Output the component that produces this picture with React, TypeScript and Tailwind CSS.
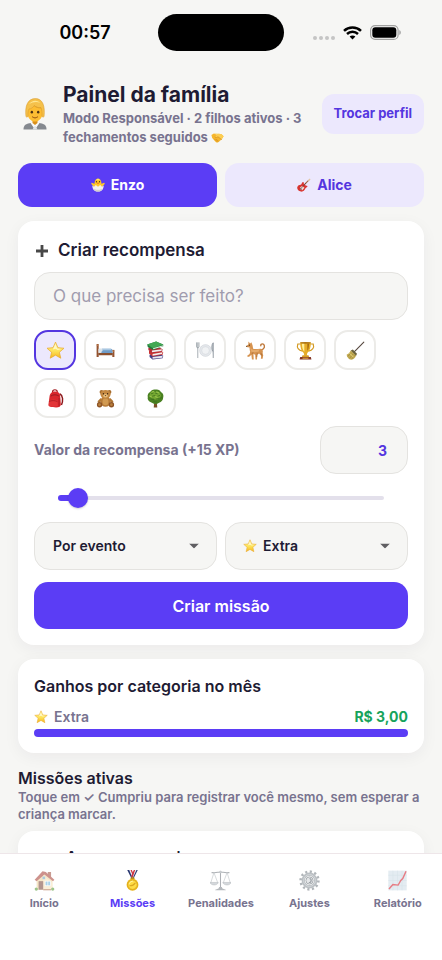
import { useState } from "react";
import type { ReactNode } from "react";

type IconProps = { className?: string };

function Svg({ className, box = "0 0 32 32", children }: IconProps & { box?: string; children: ReactNode }) {
  return (
    <svg viewBox={box} fill="none" className={className} aria-hidden="true">
      {children}
    </svg>
  );
}

function Parent({ className }: IconProps) {
  return (
    <Svg className={className} box="0 0 24 32">
      <path d="M.5 31.500c0-4 2-5.600 6-6.200L12 24l5.500 1.300c4 .6 6 2.200 6 6.200z" fill="#85898f" />
      <path d="M7.500 25l4.500 6.500 4.500-6.500-2-2h-5z" fill="#f8f9fa" />
      <path d="M12 27.500l-1 1.500-1.500 2.500h5L13 29z" fill="#dfe3e8" />
      <path d="M9.500 20h5v5L12 27l-2.500-2z" fill="#d98f1c" />
      <g transform="translate(1.700 0) scale(.86 .98)">
        <path d="M3.200 11c0-5 3.800-8 8.800-8s8.800 3 8.800 8v4c0 5-4 9-8.800 9s-8.800-4-8.800-9z" fill="#fdbd33" />
        <path
          d="M1.500 19C0 8 3.500.6 12.500.6c8 0 11.500 7 10 18.400-1 .8-2 .6-2.400-.5.2-3.500-.1-6-1.100-8.500-3 .2-5.800-.6-8-2.200C9.500 10 7.500 11 5 11.200c-1 2-1.400 4-1.200 7.300-.4 1.100-1.400 1.300-2.300.5z"
          fill="#f5c14b"
          stroke="#d9992b"
          strokeWidth=".6"
        />
        <path d="M5 6.500c3-4 9-5 13-1.500-4-1.500-9-1-13 1.500z" fill="#ffe793" />
        <path d="M11 7.800c1.600 1.200 4 2.300 8 2.200" stroke="#d9992b" strokeWidth=".7" />
        <circle cx="8.300" cy="14.500" r="1.400" fill="#4d3215" />
        <circle cx="15.700" cy="14.500" r="1.400" fill="#4d3215" />
        <path d="M9 19.300c2 1.300 4 1.300 6 0" stroke="#9c5a12" strokeWidth="1.100" strokeLinecap="round" />
      </g>
    </Svg>
  );
}

function Handshake({ className }: IconProps) {
  return (
    <Svg className={className}>
      <path d="M1 10l6-4 8 3 4-2 7 1 5 5-5 8-9 7c-3 1-5-1-7-3L3 17z" fill="#f6b62c" />
      <path d="M7 6l8 3-5 6c2 2 5 1 7-1l8 7 3-3 3-5-5-5-7-1" fill="#fccd52" />
      <path d="M10 15c2 2 5 1 7-1l9 7M13 20l5 5M9 20l6 6" stroke="#c67f18" strokeWidth="1.400" strokeLinecap="round" />
    </Svg>
  );
}

function Chick({ className }: IconProps) {
  return (
    <Svg className={className}>
      <path d="M4 17c-4-2-4-6-2-6 2 0 3 2 6 2 0-7 3-12 8-12s8 5 8 12c3 0 4-2 6-2s2 4-2 6l-4 5H8z" fill="#ffc928" />
      <path d="M12 3c2-2 6-2 8 0-2 3-6 3-8 0z" fill="#ffe56e" />
      <circle cx="12.500" cy="8.500" r="1.500" fill="#4b3214" />
      <circle cx="19.500" cy="8.500" r="1.500" fill="#4b3214" />
      <path d="M13 11.500l3-1.200 3 1.200-3 2.500z" fill="#ec7325" />
      <path d="M3 17l4 3 4-4 5 4 5-4 4 4 4-3c0 9-5 14-13 14S3 26 3 17z" fill="#f4f2ee" />
      <path d="M6 24c5 4 15 4 20 0-2 5-5 7-10 7S8 29 6 24z" fill="#d3cfca" />
    </Svg>
  );
}

function Guitar({ className }: IconProps) {
  return (
    <Svg className={className}>
      <path d="M14 18L27 5" stroke="#a06a44" strokeWidth="2.500" />
      <path d="M25 5l4-4 2 2-4 5z" fill="#e2c7a4" />
      <path d="M2 18c2-4 6-1 8-4s1-5 5-5l1 5 4 3 4 1c0 3-3 3-5 6-2 4-5 8-10 7C2 30-2 23 2 18z" fill="#d8342f" />
      <path d="M7 21l5-3 5 4-5 6c-3-1-5-3-5-7z" fill="#f3dfd8" />
      <path d="M8 25L21 11" stroke="#55423e" strokeWidth="1.500" />
      <path d="M7 22l4 5" stroke="#6a6470" strokeWidth="2" />
    </Svg>
  );
}

function Plus({ className }: IconProps) {
  return (
    <Svg className={className}>
      <path d="M13.200 4h5.600v9.200H28v5.600h-9.200V28h-5.600v-9.200H4v-5.600h9.200z" fill="#484848" />
    </Svg>
  );
}

function Star({ className }: IconProps) {
  return (
    <Svg className={className}>
      <defs>
        <linearGradient id="starFill" x1="0" y1="0" x2="0" y2="1">
          <stop stopColor="#fff09a" />
          <stop offset=".55" stopColor="#fde35a" />
          <stop offset="1" stopColor="#f5b51f" />
        </linearGradient>
      </defs>
      <path
        d="M16 1.800l4.100 9.400 10.200 1-7.700 6.800 2.300 10L16 23.800 7.100 29l2.300-10-7.700-6.800 10.200-1z"
        fill="url(#starFill)"
        stroke="#e9a92c"
        strokeWidth="1.200"
        strokeLinejoin="round"
      />
      <path d="M16 5l2.800 7.800 7 .7-6 1.500L16 13l-4.500 1.500z" fill="#fff8c4" />
    </Svg>
  );
}

function Bed({ className }: IconProps) {
  return (
    <Svg className={className}>
      <path d="M1 5h3.500v22H1z" fill="#94532f" />
      <path d="M27.500 15H31v12h-3.500z" fill="#94532f" />
      <path d="M4 19.500h24V24H4z" fill="#8a4f2d" />
      <path d="M4 17h24v3H4z" fill="#dfe8ef" />
      <path d="M10 13h15c2 0 3 1.500 3 7H9z" fill="#6f9cc8" />
      <path d="M10 13h15l1.500 2.500H11z" fill="#a8c7e2" />
      <rect x="4" y="12.500" width="7" height="5" rx="2" fill="#dbe3ea" />
      <path d="M1 7h3.500M27.500 17H31" stroke="#c98b5c" strokeWidth="1.500" />
    </Svg>
  );
}

function Books({ className }: IconProps) {
  return (
    <Svg className={className}>
      <path d="M6 23l16-2 7 4-1 4-17 2-5-4z" fill="#453b83" />
      <path d="M11 27l17-2-.5 3L11 30z" fill="#e8e8ef" />
      <path d="M5 17l17-2 7 4-1 4-17 3-6-5z" fill="#c83232" />
      <path d="M11 22l17-3-1 3-16 3z" fill="#f2eeee" />
      <path d="M4 11l17-1 7 4-1 4-17 2-6-5z" fill="#b42b36" />
      <path d="M10 16l17-2-1 3-16 2z" fill="#f0efef" />
      <path d="M2 6l15-5 12 5v3l-17 6L3 10z" fill="#207c3c" />
      <path d="M2 6l15-5 12 5-17 6z" fill="#43a854" />
      <path d="M12 12l17-5v2l-17 5z" fill="#e9f1e7" />
    </Svg>
  );
}

function Plate({ className }: IconProps) {
  return (
    <Svg className={className}>
      <circle cx="16" cy="16" r="10" fill="#e5e8ec" stroke="#c7ccd2" strokeWidth=".8" />
      <circle cx="16" cy="16" r="6.500" fill="#f0f2f4" stroke="#cfd4da" strokeWidth=".9" />
      <path d="M1 3v7c0 2 4 2 4 0V3M3 3v25" stroke="#8d959e" strokeWidth="1.300" strokeLinecap="round" />
      <path d="M29 28V3c-3 3-3 10-1 14" stroke="#8d959e" strokeWidth="1.500" fill="#c3c9cf" strokeLinecap="round" />
    </Svg>
  );
}

function Dog({ className }: IconProps) {
  return (
    <Svg className={className}>
      <path d="M25 15c6-1 7-6 5-9-2-2-6-1-5 2" stroke="#bf793c" strokeWidth="2.300" strokeLinecap="round" />
      <path
        d="M4 1l3 3 2-2 2 5 1 6c4 1 8 0 12 0 4 0 5 3 4 7l1 4-1 6h-3l.5-5-3.500-4-3 2-.5 8H16l-.5-8-3-1 .5 9h-3l-1-8-3 3-3 1-1-2 4-3 1-4c-1-3-1-5-1-7l-5-1V8l3-2z"
        fill="#d69350"
      />
      <path d="M7 10c2 4 4 5 8 5l8-1-2 4-7 1-5-1z" fill="#e5ab6c" />
      <path d="M12 19l-2 3M19 20l-1 7M25 20l2 5" stroke="#9b6033" strokeWidth="1" />
      <circle cx="5.500" cy="7" r=".9" fill="#3c2412" />
      <circle cx="1.200" cy="9" r=".9" fill="#3c2412" />
    </Svg>
  );
}

function Trophy({ className }: IconProps) {
  return (
    <Svg className={className}>
      <path d="M8 5H3c-2 6 1 11 8 12M24 5h5c2 6-1 11-8 12" stroke="#d49b24" strokeWidth="2" />
      <path d="M7 2h18c0 9-2 15-6 18l-1 5h-4l-1-5C9 17 7 11 7 2z" fill="#e6ad27" />
      <path d="M10 4h4v14c-3-3-4-8-4-14z" fill="#fff09b" />
      <path d="M19 4h3c0 6-1 10-3 13z" fill="#a96d12" />
      <ellipse cx="16" cy="3" rx="9" ry="1.500" fill="#ad761a" />
      <path d="M11 24h10l1 3H10z" fill="#d79a22" />
      <path d="M7 27h18l1 4H6z" fill="#843526" />
      <path d="M11 28h10v2H11z" fill="#d69e35" />
    </Svg>
  );
}

function Broom({ className }: IconProps) {
  return (
    <Svg className={className}>
      <path d="M13 19L30 2" stroke="#54463c" strokeWidth="1.800" strokeLinecap="round" />
      <path d="M8 16l9 8c-1 4-4 7-8 7.500-5-1-7-4-8-8.500 3-1 5-3 7-7z" fill="#c2aa50" />
      <path d="M8 16l3.500-1.500 7 7L17 25z" fill="#6b633c" />
      <path d="M9 20l-6 6M12 22l-6 7M15 24l-5 6" stroke="#8f7a36" strokeWidth="1" />
      <path d="M6 20.500l7 7" stroke="#eddd83" strokeWidth="1.600" />
    </Svg>
  );
}

function Backpack({ className }: IconProps) {
  return (
    <Svg className={className}>
      <path d="M23 8c6 3 6 12 3 19" stroke="#8c171b" strokeWidth="2.500" />
      <path d="M11 5c0-5 8-5 8 0" stroke="#a31c21" strokeWidth="2" />
      <path d="M6 12c1-6 5-8 9-8 6 0 9 3 9 9l1 13c0 3-3 5-8 5-8 0-13-1-13-4z" fill="#d9272d" />
      <path d="M8 12c4-3 10-3 14 0" stroke="#8e1b20" strokeWidth="1.500" />
      <path d="M5 19c5-2 10-2 14 0l1 9c-4 2-11 2-15 0z" fill="#e23538" />
      <path d="M5 21c5-2 9-2 14 0M22 15v14" stroke="#a51b22" strokeWidth="1.300" />
    </Svg>
  );
}

function Teddy({ className }: IconProps) {
  return (
    <Svg className={className}>
      <circle cx="9.500" cy="5" r="3.500" fill="#a66b2d" />
      <circle cx="22.500" cy="5" r="3.500" fill="#a66b2d" />
      <path d="M8 15l-5 5c-1 3 2 4 4 2l5-3M24 15l5 5c1 3-2 4-4 2l-5-3" fill="#b07735" />
      <ellipse cx="16" cy="21" rx="8.500" ry="9" fill="#b77b38" />
      <ellipse cx="16" cy="21.500" rx="5" ry="6" fill="#d19a52" />
      <ellipse cx="16" cy="9" rx="8.500" ry="7.500" fill="#c48841" />
      <ellipse cx="16" cy="11.500" rx="4" ry="3" fill="#e8be7c" />
      <circle cx="12.500" cy="8" r="1.100" fill="#372313" />
      <circle cx="19.500" cy="8" r="1.100" fill="#372313" />
      <path d="M14.500 10.500h3L16 12z" fill="#372313" />
      <circle cx="6" cy="26.500" r="4.500" fill="#8d5426" />
      <circle cx="26" cy="26.500" r="4.500" fill="#8d5426" />
      <circle cx="6" cy="26.500" r="2.300" fill="#b97f3e" />
      <circle cx="26" cy="26.500" r="2.300" fill="#b97f3e" />
    </Svg>
  );
}

function Tree({ className }: IconProps) {
  return (
    <Svg className={className}>
      <path d="M14 20h4l1 11h-6z" fill="#795127" />
      <path d="M16 1c4-1 8 1 9 4 4 2 5 6 4 9 0 5-3 8-7 9-4 3-8 3-12 0-5-1-8-5-7-9-1-4 1-8 4-9 2-3 5-5 9-4z" fill="#4a8122" />
      <path d="M7 7c2-4 6-4 9-2 4-2 7 0 8 3 2 3 1 6-2 7-3 4-7 4-9 1-5 1-8-4-6-9z" fill="#75a832" />
      <path d="M9 8l3-1M16 7l3 1M11 12l4-1M20 12l3-1M9 17l4 1M17 17l4-1M25 16l2-2M13 21l5 1" stroke="#3d6f1c" strokeWidth="1.300" strokeLinecap="round" />
      <path d="M10 5l3-1M18 5l3 1M6 12l3 1M16 13l3 1" stroke="#a9cf58" strokeWidth="1.300" strokeLinecap="round" />
    </Svg>
  );
}

function House({ className }: IconProps) {
  return (
    <Svg className={className}>
      <path d="M21 3h5v8h-5z" fill="#a65c4b" />
      <path d="M4 15L16 4l12 11v15H4z" fill="#f0d6a3" />
      <path d="M1 15L13 2l5 1 13 12-2 2L16 7 4 17z" fill="#ad4b42" />
      <path d="M14 8l14 11v10H14z" fill="#f7e3bd" />
      <rect x="7" y="17" width="7" height="13" fill="#815044" />
      <rect x="17" y="17" width="8" height="7" fill="#73b5d9" stroke="#fff" />
      <path d="M21 17v7" stroke="#fff" />
      <rect x="13" y="10" width="4" height="4" fill="#70a6c8" />
      <circle cx="3.500" cy="29" r="2.500" fill="#5d9e3f" />
      <circle cx="28.500" cy="29" r="2.500" fill="#5d9e3f" />
      <path d="M14 30h12" stroke="#b67c5c" strokeWidth="2" />
    </Svg>
  );
}

function Medal({ className }: IconProps) {
  return (
    <Svg className={className}>
      <path d="M8 0h5l5 11-3 3z" fill="#27356f" />
      <path d="M11 0h3l4 9-2 3z" fill="#f1f2f5" />
      <path d="M13 0h2l3 7-1 3z" fill="#cf3441" />
      <path d="M24 0h-5l-5 11 3 3z" fill="#27356f" />
      <path d="M22 0h-3l-4 10 1 3z" fill="#f1f2f5" />
      <path d="M20 0h-2l-4 9 2 3z" fill="#cf3441" />
      <rect x="13" y="11" width="6" height="4" rx="1" fill="#b98b17" />
      <circle cx="16" cy="22.500" r="9" fill="#e8b41c" />
      <circle cx="16" cy="22.500" r="7" fill="#ffdc45" stroke="#d9a620" />
      <path d="M12 24c4 0 6-1 8-4" stroke="#dba823" strokeWidth="1.800" strokeLinecap="round" />
      <path d="M11 21c1-3 4-4 6-4" stroke="#fff4a5" strokeWidth="1.500" />
    </Svg>
  );
}

function Scale({ className }: IconProps) {
  return (
    <Svg className={className}>
      <path d="M16 2v26M3 4c7 1 9-1 13-1s6 2 13 1" stroke="#777d84" strokeWidth="1.600" strokeLinecap="round" />
      <path d="M6 4L1 20M6 4l6 16M26 4l-6 16M26 4l5 16" stroke="#939aa2" strokeWidth=".9" />
      <path d="M0 19h12.500c-1 5-11 5-12.500 0zM19.500 19H32c-1 5-11 5-12.500 0z" fill="#b9bfc5" stroke="#858c94" strokeWidth=".8" />
      <path d="M14 26h4l1 2 5 2v1H8v-1l5-2z" fill="#858b92" />
      <circle cx="16" cy="3" r="2" fill="#a2a9af" />
    </Svg>
  );
}

function Gear({ className }: IconProps) {
  return (
    <Svg className={className}>
      <circle cx="16" cy="16" r="13.500" stroke="#7c848b" strokeWidth="4" strokeDasharray="3.200 3.869" />
      <circle cx="16" cy="16" r="9.500" stroke="#8f979d" strokeWidth="5" />
      <circle cx="16" cy="16" r="9" stroke="#b7bdc2" strokeWidth="1.500" />
      <circle cx="16" cy="16" r="5.500" fill="#d4d8dc" stroke="#697178" strokeWidth="1.400" />
      <path d="M16 13a3 3 0 1 1-1 6" stroke="#596169" strokeWidth="1.800" />
    </Svg>
  );
}

function Chart({ className }: IconProps) {
  return (
    <Svg className={className}>
      <rect x="2" y="1" width="28" height="30" fill="#d3e1ea" />
      <path d="M2 8h28M2 16h28M2 24h28M9 1v30M16 1v30M23 1v30" stroke="#bccfdb" strokeWidth=".8" />
      <path d="M3 29l6-7 8 1 4-7 3-3 5-11" stroke="#d82734" strokeWidth="2.200" />
    </Svg>
  );
}

function StatusBar() {
  return (
    <div className="grid h-[65px] shrink-0 grid-cols-[1fr_126px_1fr] items-center">
      <span className="pl-3 text-center text-lg font-semibold text-black">00:57</span>
      <div className="h-[37px] rounded-full bg-black" />
      <div className="flex items-center justify-center gap-2 pr-3">
        <svg width="22" height="18" viewBox="0 0 22 18" fill="#c5c5c4" aria-hidden="true">
          <circle cx="2" cy="14" r="2" />
          <circle cx="8" cy="14" r="2" />
          <circle cx="14" cy="14" r="2" />
          <circle cx="20" cy="14" r="2" />
        </svg>
        <svg width="19" height="14" viewBox="0 0 19 14" fill="none" stroke="#000" strokeWidth="2.500" aria-hidden="true">
          <path d="M1 4.800c4.700-4.500 12.300-4.500 17 0" />
          <path d="M4 8c3.100-2.900 7.900-2.900 11 0" />
          <path d="M9.500 13.500l-2.900-2.900c1.600-1.500 4.200-1.500 5.800 0z" fill="#000" stroke="none" />
        </svg>
        <svg width="31" height="15" viewBox="0 0 31 15" fill="none" aria-hidden="true">
          <rect x=".6" y=".6" width="27.500" height="13.800" rx="4.500" stroke="#a1a1a0" strokeWidth="1.200" />
          <rect x="2.300" y="2.300" width="24" height="10.400" rx="3" fill="#000" />
          <path d="M29.300 5v5c2-.7 2-4.300 0-5z" fill="#a1a1a0" />
        </svg>
      </div>
    </div>
  );
}

function Caret() {
  return (
    <svg
      viewBox="0 0 10 5"
      className="pointer-events-none absolute right-[18px] top-1/2 h-[5px] w-2.5 -translate-y-1/2"
      aria-hidden="true"
    >
      <path d="M0 0h10L5 5z" fill="#605f62" />
    </svg>
  );
}

const CHILDREN = [
  { name: "Enzo", Icon: Chick },
  { name: "Alice", Icon: Guitar },
];

const REWARD_ICONS = [
  { label: "Estrela", Icon: Star },
  { label: "Cama", Icon: Bed },
  { label: "Livros", Icon: Books },
  { label: "Prato", Icon: Plate },
  { label: "Cachorro", Icon: Dog },
  { label: "Troféu", Icon: Trophy },
  { label: "Vassoura", Icon: Broom },
  { label: "Mochila", Icon: Backpack },
  { label: "Urso", Icon: Teddy },
  { label: "Árvore", Icon: Tree },
];

const NAV = [
  { label: "Início", Icon: House },
  { label: "Missões", Icon: Medal },
  { label: "Penalidades", Icon: Scale },
  { label: "Ajustes", Icon: Gear },
  { label: "Relatório", Icon: Chart },
];

const MAX_VALUE = 50;

export default function App() {
  const [child, setChild] = useState("Enzo");
  const [icon, setIcon] = useState("Estrela");
  const [value, setValue] = useState(3);

  return (
    <div className="flex h-screen flex-col bg-[#f6f6f4] font-['Inter','Liberation_Sans',sans-serif] text-[#1e1b33]">
      <StatusBar />

      <main className="min-h-0 flex-1 overflow-y-auto px-[18px] pb-4 pt-4 [scrollbar-width:none]">
        <header className="flex items-center">
          <Parent className="ml-[5px] mr-4 h-8 w-6 shrink-0" />
          <div className="min-w-0 flex-1">
            <h1 className="text-[21px] font-bold leading-7">Painel da família</h1>
            <p className="text-[13px] font-bold leading-[19px] text-[#78738f]">
              Modo Responsável · 2 filhos ativos · 3 fechamentos seguidos{" "}
              <Handshake className="inline-block size-[13px] align-[-2px]" />
            </p>
          </div>
          <button type="button" className="ml-2 h-10 shrink-0 rounded-xl bg-[#ece8fd] px-3 text-[13px] font-bold text-[#5436e0]">
            Trocar perfil
          </button>
        </header>

        <div className="mt-4 flex gap-2">
          {CHILDREN.map(({ name, Icon }) => (
            <button
              key={name}
              type="button"
              aria-pressed={child === name}
              onClick={() => setChild(name)}
              className={`flex h-11 flex-1 items-center justify-center gap-1.5 rounded-[14px] text-sm font-bold ${
                child === name ? "bg-[#5b3df5] text-white" : "bg-[#ece8fd] text-[#5436e0]"
              }`}
            >
              <Icon className="size-3.5" />
              {name}
            </button>
          ))}
        </div>

        {/* Criar recompensa */}
        <section className="mt-3.5 rounded-2xl bg-white p-4 shadow-[0_4px_16px_rgba(30,27,51,0.05)]">
          <h2 className="flex items-center gap-2 text-[17px] font-semibold leading-[27px]">
            <Plus className="size-4" />
            Criar recompensa
          </h2>
          <input
            type="text"
            aria-label="Missão"
            placeholder="O que precisa ser feito?"
            className="mt-2 h-12 w-full rounded-2xl border border-[#e4e3e0] bg-[#f6f6f4] px-[18px] text-[17px] outline-none placeholder:text-[#a09cae]"
          />

          <div className="mt-2.5 flex flex-wrap gap-2">
            {REWARD_ICONS.map(({ label, Icon }) => (
              <button
                key={label}
                type="button"
                aria-label={label}
                aria-pressed={icon === label}
                onClick={() => setIcon(label)}
                className={`flex h-10 w-[42px] items-center justify-center rounded-[14px] border-2 ${
                  icon === label ? "border-[#5436e0] bg-[#ece8fd]" : "border-[#ecebe8] bg-white"
                }`}
              >
                <Icon className="size-[19px]" />
              </button>
            ))}
          </div>

          <div className="mt-2 flex items-center justify-between">
            <label htmlFor="valor" className="text-sm font-bold text-[#78738f]">
              Valor da recompensa (+15 XP)
            </label>
            <input
              id="valor"
              type="text"
              inputMode="numeric"
              value={value}
              onChange={(e) => setValue(Math.min(MAX_VALUE, Number(e.target.value) || 0))}
              className="h-12 w-[88px] rounded-2xl border border-[#e4e3e0] bg-[#f6f6f4] px-5 text-right text-sm font-bold text-[#5436e0] outline-none"
            />
          </div>

          <div className="relative mx-3.5 flex h-12 items-center">
            <div className="absolute inset-x-2.5 h-1 rounded-full bg-[#e3e0eb]" />
            <div className="absolute inset-x-2.5">
              <div className="h-1.5 rounded-full bg-[#5b3df5]" style={{ width: `${(value / MAX_VALUE) * 100}%` }} />
            </div>
            <input
              type="range"
              aria-label="Valor da recompensa"
              min={0}
              max={MAX_VALUE}
              value={value}
              onChange={(e) => setValue(Number(e.target.value))}
              className="relative h-5 w-full cursor-pointer appearance-none bg-transparent [&::-webkit-slider-thumb]:size-5 [&::-webkit-slider-thumb]:appearance-none [&::-webkit-slider-thumb]:rounded-full [&::-webkit-slider-thumb]:bg-[#5b3df5] [&::-webkit-slider-thumb]:shadow-[0_1px_2px_rgba(30,27,51,0.2)]"
            />
          </div>

          <div className="grid grid-cols-2 gap-2">
            <div className="relative">
              <select
                aria-label="Frequência"
                className="h-12 w-full appearance-none rounded-2xl border border-[#e4e3e0] bg-[#f6f6f4] px-[18px] text-sm font-semibold"
              >
                <option>Por evento</option>
              </select>
              <Caret />
            </div>
            <div className="relative">
              <Star className="pointer-events-none absolute left-[18px] top-1/2 size-3.5 -translate-y-1/2" />
              <select
                aria-label="Categoria"
                className="h-12 w-full appearance-none rounded-2xl border border-[#e4e3e0] bg-[#f6f6f4] pl-[37px] pr-4 text-sm font-semibold"
              >
                <option>Extra</option>
              </select>
              <Caret />
            </div>
          </div>

          <button type="button" className="mt-3 h-[47px] w-full rounded-[14px] bg-[#5b3df5] text-base font-semibold text-white">
            Criar missão
          </button>
        </section>

        {/* Ganhos */}
        <section className="mt-3.5 rounded-2xl bg-white p-4 shadow-[0_4px_16px_rgba(30,27,51,0.05)]">
          <h2 className="text-base font-semibold leading-[22px]">Ganhos por categoria no mês</h2>
          <div className="mt-2.5 flex items-center justify-between text-sm font-semibold leading-5">
            <span className="flex items-center gap-1.5 text-[#78738f]">
              <Star className="size-3.5" />
              Extra
            </span>
            <span className="font-bold text-[#17a35b]">R$ 3,00</span>
          </div>
          <div className="mt-0.5 h-2 rounded-full bg-[#5b3df5]" />
        </section>

        {/* Missões ativas */}
        <h2 className="mt-3.5 text-base font-semibold leading-[22px]">Missões ativas</h2>
        <p className="text-[13px] font-semibold leading-[17px] text-[#78738f]">
          Toque em ✓ Cumpriu para registrar você mesmo, sem esperar a criança marcar.
        </p>
        <article className="mt-2 flex min-h-20 items-center gap-3 rounded-2xl bg-white p-4 shadow-[0_4px_16px_rgba(30,27,51,0.05)]">
          <Bed className="size-5" />
          <h3 className="self-start text-[15px] font-semibold leading-5">Arrumar o quarto</h3>
        </article>
      </main>

      <nav className="relative grid shrink-0 grid-cols-5 border-t border-[#eee6e9] bg-white pb-12 pt-4">
        {NAV.map(({ label, Icon }) => {
          const active = label === "Missões";
          return (
            <a
              key={label}
              href="#"
              aria-current={active ? "page" : undefined}
              className={`flex flex-col items-center gap-1 text-[11px] font-bold leading-[17px] ${
                active ? "text-[#5b3df5]" : "text-[#78738f]"
              }`}
            >
              <Icon className={`size-[21px] ${active ? "" : "opacity-60"}`} />
              {label}
            </a>
          );
        })}
      </nav>
    </div>
  );
}
